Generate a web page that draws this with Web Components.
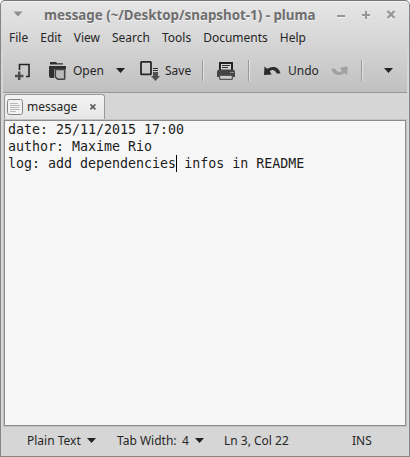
<!DOCTYPE html>
<html lang="en"><head><meta charset="utf-8"><title>message - pluma</title>
<style>html,body{margin:0;background:#fff}body{width:410px;height:457px;overflow:hidden}</style></head>
<body>
<pluma-window></pluma-window>
<script>
const define=(name,html)=>customElements.define(name,class extends HTMLElement{
  constructor(){super();this.attachShadow({mode:'open'}).innerHTML=html;}
});
define('down-arrow',`<style>:host{display:block;width:9px;height:5px}svg{display:block}</style>
<svg width="9" height="5"><path d="M0 0H9L4.5 5Z" fill="currentColor"/></svg>`);
define('tool-separator',`<style>:host{display:block;width:1px;height:21px;background:#989898;border-right:1px solid #e2e2e2}</style>`);
define('title-bar',`<style>
:host{display:flex;height:25px;align-items:center;color:#8f8f8f;box-sizing:border-box;padding:2px 12px 0 12px}
svg{display:block;flex:none}
.t{font:bold 13.33px/20px "Noto Sans",sans-serif;color:#6e6e6e;text-shadow:0 1px #f2f2f2;white-space:pre;margin-left:21px;width:291px;flex:none}
.g{margin-right:13px}.c{margin-right:0}</style>
<svg width="10" height="6" style="margin-bottom:2px"><path d="M.5 .5H9.5L5 5.5Z" fill="#8f8f8f"/></svg>
<div class="t"><slot></slot></div>
<svg class="g" width="12" height="12"><path d="M2 8.5H10" stroke="#f0f0f0" stroke-width="1"/><path d="M2 7H10" stroke="#969696" stroke-width="2"/></svg>
<svg class="g" width="12" height="12"><path d="M2 7H10M6 3V11" stroke="#f0f0f0" stroke-width="2"/><path d="M2 6H10M6 2V10" stroke="#969696" stroke-width="2"/></svg>
<svg class="c" width="12" height="12"><path d="M2.5 3l7 7m0-7l-7 7" stroke="#f0f0f0" stroke-width="2.3"/><path d="M2.5 2l7 7m0-7l-7 7" stroke="#969696" stroke-width="2.3"/></svg>`);
define('menu-bar',`<style>:host{display:flex;height:23px;padding-left:8px;gap:12px;line-height:23px}</style><slot></slot>`);
define('tool-bar',`<style>
:host{display:flex;align-items:center;height:44px;box-sizing:border-box;margin:0 2px 0 2px;border-bottom:1px solid #989898;padding-left:12px;background:linear-gradient(#d3d3d3,#c0c0c0)}
svg{display:block;flex:none}.l{white-space:pre;line-height:18px;padding-top:1px}down-arrow{color:#222}</style>
<svg width="18" height="18" viewBox="15 62 18 18" fill="none"><path d="M19.5 70V64.5H29V76.5H26" stroke="#242424" stroke-width="1.6"/><path d="M14.8 76H23.5M19.2 71.5V80" stroke="#4c4c4c" stroke-width="2.5"/></svg>
<svg style="margin-left:16px" width="18" height="18" viewBox="49 62 18 18"><path d="M49 76V66H65V68H52Z" fill="#2b2b2b"/><path d="M50 64.5V62H56L57 63.2H63V64.5ZM49 66H66V69H54V78H51Q49 78 49 76Z" fill="#303030"/><path d="M55.3 69.5H64.7V78Q64.7 79.4 63.5 79.4H58L55.3 77Z" fill="#bababa" stroke="#454545" stroke-width="1.6"/></svg>
<span class="l" style="margin-left:6px;width:31px">Open</span><down-arrow style="margin-left:12px"></down-arrow>
<svg style="margin-left:15px" width="20" height="20" viewBox="140 61 20 20"><rect x="141" y="61.9" width="10" height="12.5" rx=".6" fill="none" stroke="#282828" stroke-width="1.8"/><path d="M153 68.5H158M153 70.5H158" stroke="#333" stroke-width="1"/><path d="M153 72H158V76H160L155.5 81L151 76H153Z" fill="#505050"/></svg>
<span class="l" style="margin-left:5px;width:27px">Save</span><tool-separator style="margin-left:10px"></tool-separator>
<svg style="margin-left:12px" width="20" height="20" viewBox="216 61 20 20"><path d="M220 70V63H232V70" fill="#d5d5d5" stroke="#222" stroke-width="2"/><path d="M222 65.5H230M222 67.5H228" stroke="#303030" stroke-width="1"/><path d="M217 72Q217 69.5 219 69.5H233Q235 69.5 235 72V77H217Z" fill="#444"/><rect x="219.6" y="75.4" width="12.8" height="4" rx="1" fill="#ccc" stroke="#555" stroke-width="1.2"/><path d="M230.3 72.5H231.3M232.5 72.5H233.5" stroke="#ddd"/></svg>
<tool-separator style="margin-left:12px"></tool-separator>
<svg style="margin-left:13px" width="18" height="12" viewBox="263 65 18 12"><path d="M264.5 66.5L267.2 68.8Q270.5 66.5 274.5 67Q279 67.8 280.5 73.4H276.8Q275.3 70.3 273 70Q271 70 269.7 71.2L271.7 74.4L264 75Z" fill="#2c2c2c"/></svg>
<span class="l" style="margin-left:7px;width:30px">Undo</span>
<svg style="margin-left:13px" width="18" height="12" viewBox="331 65 18 12"><path d="M347.6 66.5L347.3 75L344.5 73Q341.5 75.5 337.5 75Q333 74.3 331.2 68.8H335Q336.5 71.7 339 72Q341 72 342 70.8L340 67.8Z" fill="#a0a0a0"/></svg>
<tool-separator style="margin-left:12px"></tool-separator><down-arrow style="margin-left:21px"></down-arrow>`);
define('doc-tab',`<style>
:host{display:flex;width:101px;height:26px;box-sizing:border-box;border:1px solid #999;border-bottom:0;border-radius:3px 3px 0 0;background:linear-gradient(#f3f3f3,#e6e6e6);align-items:center;padding:0 0 2px 2px}
svg{display:block}.n{margin-left:4px;width:56px;white-space:pre;line-height:18px;font-size:12px}</style>
<svg width="16" height="16"><rect x=".5" y=".5" width="15" height="15" rx="2" fill="#f2f2f2" stroke="#858585"/><path d="M3 4.5H11M3 6.5H13M3 8.5H12M3 10.5H13M3 12.5H9" stroke="#aaa" stroke-width=".8"/></svg>
<span class="n"><slot></slot></span>
<svg width="8" height="8" style="margin-left:6px"><path d="M1.4 1.4l5 5m0-5l-5 5" stroke="#5c5c5c" stroke-width="1.6"/></svg>`);
define('text-editor',`<style>
:host{display:block;height:306px;box-sizing:border-box;margin:0 3px;background:#f7f7f7;border:1px solid #8c8c8c;box-shadow:0 0 0 1px #c2c2c2;padding:0 0 0 3px;font:13.31px/17px "DejaVu Sans Mono",monospace;color:#1c1c1c}
</style><slot></slot>`);
define('text-caret',`<style>:host{display:inline-block;width:1px;height:17px;margin-right:-1px;background:#000;vertical-align:top}</style>`);
define('status-bar',`<style>
:host{display:flex;align-items:center;height:27px;padding:1px 0 0 26px;line-height:18px}span{white-space:pre}
down-arrow{color:#222}</style>
<span style="width:54px">Plain Text</span><down-arrow style="margin-left:6px"></down-arrow>
<span style="margin-left:21px;width:65px">Tab Width:</span><span style="width:7px">4</span><down-arrow style="margin-left:6px"></down-arrow>
<span style="margin-left:20px;width:128px">Ln 3, Col 22</span><span>INS</span>`);
define('pluma-window',`<style>
:host{display:block;width:410px;height:457px;box-sizing:border-box;border:1px solid #858585;border-top-color:#777;border-radius:5px 5px 0 0;background:linear-gradient(#e6e6e6,#d3d3d3 48px,#d6d6d6 49px);font:12px "Noto Sans",sans-serif;color:#262626;overflow:hidden;box-shadow:inset 0 1px #f3f3f3}
.tabs{height:26px;padding:1px 0 0 3px}
</style>
<title-bar>message (~/Desktop/snapshot-1) - pluma</title-bar>
<menu-bar><span>File</span><span>Edit</span><span>View</span><span>Search</span><span>Tools</span><span>Documents</span><span>Help</span></menu-bar>
<tool-bar></tool-bar>
<div class="tabs"><doc-tab>message</doc-tab></div>
<text-editor><div>date: 25/11/2015 17:00</div><div>author: Maxime Rio</div><div>log: add dependencies<text-caret></text-caret> infos in README</div></text-editor>
<status-bar></status-bar>`);
</script></body></html>
